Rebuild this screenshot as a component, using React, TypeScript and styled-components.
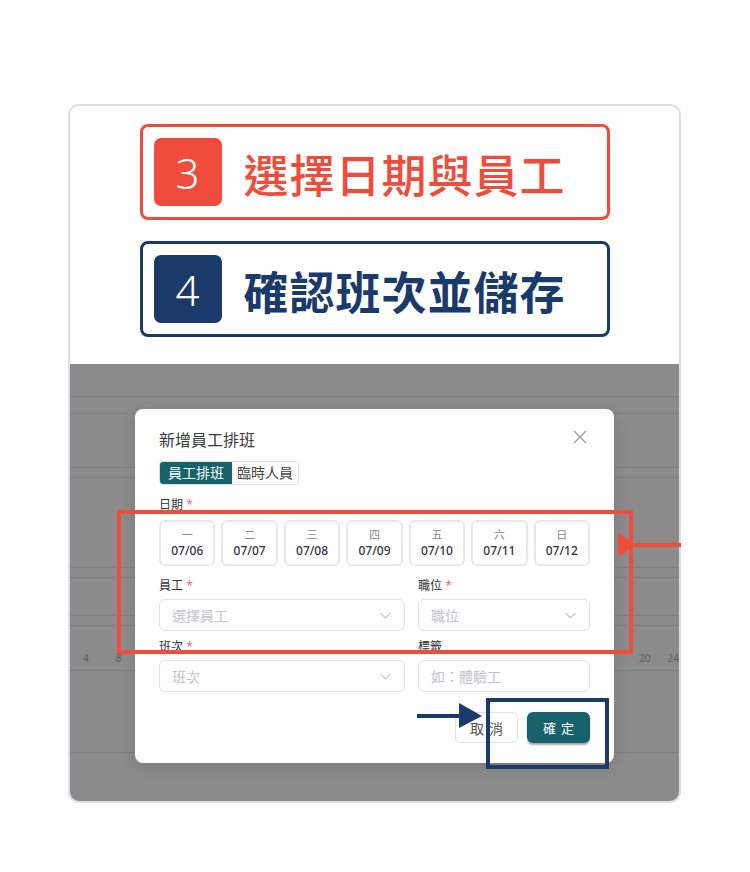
import React from "react";
import styled, { createGlobalStyle } from "styled-components";

const RED = "#f04c3c";
const NAVY = "#1b3a6c";
const TEAL = "#17626b";

const days = [
  { name: "一", date: "07/06" },
  { name: "二", date: "07/07" },
  { name: "三", date: "07/08" },
  { name: "四", date: "07/09" },
  { name: "五", date: "07/10" },
  { name: "六", date: "07/11" },
  { name: "日", date: "07/12" }
];

// heights of the faded calendar rows behind the dialog
const bgRows = [32, 17, 54, 10, 90, 10, 38, 10, 45, 82, 49];

const Chevron = () => (
  <svg width="13" height="13" viewBox="0 0 16 16" fill="none">
    <path d="M2 5l6 6 6-6" stroke="#c0c4cc" strokeWidth="1.3" />
  </svg>
);

const App = () => {
  return (
    <Page>
      <GlobalStyle />
      <Card>
        <Steps>
          <StepBox $color={RED}>
            <Badge $color={RED}>3</Badge>
            <StepText $color={RED} $weight={500}>選擇日期與員工</StepText>
          </StepBox>
          <StepBox $color={NAVY}>
            <Badge $color={NAVY}>4</Badge>
            <StepText $color={NAVY} $weight={700}>確認班次並儲存</StepText>
          </StepBox>
        </Steps>
        <Backdrop>
          {bgRows.map((h, i) => (
            <BgRow key={i} $h={h} $first={i === 0}>
              {i === 8 && (
                <TimeAxis>
                  <TimeGroup>
                    <span>4</span>
                    <span>8</span>
                  </TimeGroup>
                  <TimeGroup>
                    <span>20</span>
                    <span>24</span>
                  </TimeGroup>
                </TimeAxis>
              )}
            </BgRow>
          ))}
          <Modal>
            <Header>
              <Title>新增員工排班</Title>
              <Close>
                <svg width="14" height="14" viewBox="0 0 14 14">
                  <path d="M1 1l12 12M13 1L1 13" stroke="#9a9a9a" strokeWidth="1.3" />
                </svg>
              </Close>
            </Header>
            <Tabs>
              <Tab $active>員工排班</Tab>
              <Tab>臨時人員</Tab>
            </Tabs>
            <Label>
              日期 <Star>*</Star>
            </Label>
            <DayGrid>
              {days.map((d) => (
                <DayButton key={d.date}>
                  <DayName>{d.name}</DayName>
                  <DayDate>{d.date}</DayDate>
                </DayButton>
              ))}
            </DayGrid>
            <FormGrid>
              <Field>
                <FieldLabel>
                  員工 <Star>*</Star>
                </FieldLabel>
                <Select>
                  <span>選擇員工</span>
                  <Chevron />
                </Select>
              </Field>
              <Field>
                <FieldLabel>
                  職位 <Star>*</Star>
                </FieldLabel>
                <Select>
                  <span>職位</span>
                  <Chevron />
                </Select>
              </Field>
              <Field>
                <FieldLabel>
                  班次 <Star>*</Star>
                </FieldLabel>
                <Select>
                  <span>班次</span>
                  <Chevron />
                </Select>
              </Field>
              <Field>
                <FieldLabel>標籤</FieldLabel>
                <Select>
                  <span>如：體驗工</span>
                </Select>
              </Field>
            </FormGrid>
            <Footer>
              <CancelButton>取消</CancelButton>
              <ConfirmButton>確定</ConfirmButton>
            </Footer>
          </Modal>
        </Backdrop>
      </Card>
      <Marks width="750" height="872" viewBox="0 0 750 872">
        <rect x="119" y="512" width="512" height="140" fill="none" stroke={RED} strokeWidth="4" />
        <line x1="634" y1="545" x2="681" y2="545" stroke={RED} strokeWidth="4" />
        <polygon points="618,533 618,557 637,545" fill={RED} />
        <rect x="488" y="700" width="119" height="67" fill="none" stroke={NAVY} strokeWidth="4" />
        <line x1="417" y1="716" x2="466" y2="716" stroke={NAVY} strokeWidth="4" />
        <polygon points="459,703 459,728 482,716" fill={NAVY} />
      </Marks>
    </Page>
  );
};

export default App;

const GlobalStyle = createGlobalStyle`
  body {
    margin: 0;
    background: #fff;
    font-family: "Noto Sans", "Noto Sans CJK TC", sans-serif;
  }
`;

const Page = styled.div`
  position: relative;
  width: 750px;
  height: 872px;
  padding: 104px 0 0 68px;
  box-sizing: border-box;
`;

const Card = styled.div`
  width: 613px;
  height: 699px;
  border: 2px solid #d9e1e5;
  border-radius: 11px;
  overflow: hidden;
  box-sizing: border-box;
  display: flex;
  flex-direction: column;
`;

const Steps = styled.div`
  height: 258px;
  padding-top: 18px;
  box-sizing: border-box;
  display: flex;
  flex-direction: column;
  align-items: center;
  gap: 21px;
  background: #fff;
`;

const StepBox = styled.div<{ $color: string }>`
  width: 470px;
  height: 96px;
  border: 3px solid ${(p) => p.$color};
  border-radius: 8px;
  box-sizing: border-box;
  display: flex;
  align-items: center;
  padding-left: 11px;
  gap: 22px;
`;

const Badge = styled.div<{ $color: string }>`
  width: 68px;
  height: 68px;
  border-radius: 7px;
  background: ${(p) => p.$color};
  color: #fff;
  font-family: "Noto Sans", sans-serif;
  font-size: 42px;
  font-weight: 300;
  display: flex;
  align-items: center;
  justify-content: center;
`;

const StepText = styled.div<{ $color: string; $weight: number }>`
  color: ${(p) => p.$color};
  font-family: "Noto Sans CJK TC", sans-serif;
  font-size: 45px;
  letter-spacing: 1px;
  font-weight: ${(p) => p.$weight};
  line-height: 1;
  margin-top: 2px;
`;

const Backdrop = styled.div`
  position: relative;
  flex: 1;
  background: #8b8b8b;
  display: flex;
  flex-direction: column;
`;

const BgRow = styled.div<{ $h: number; $first?: boolean }>`
  height: ${(p) => p.$h}px;
  flex-shrink: 0;
  box-sizing: border-box;
  border-top: ${(p) => (p.$first ? "none" : "1px solid #7e7e7e")};
  display: flex;
  align-items: center;
`;

const TimeAxis = styled.div`
  width: 100%;
  display: flex;
  justify-content: space-between;
  padding: 20px 0 0 13px;
  font-size: 10px;
  color: #5c5e63;
`;

const TimeGroup = styled.div`
  display: flex;
  gap: 27px;
  &:last-child {
    gap: 17px;
  }
`;

const Modal = styled.div`
  position: absolute;
  left: 65px;
  top: 45px;
  width: 479px;
  height: 354px;
  padding: 20px 24px;
  box-sizing: border-box;
  background: #fff;
  border-radius: 8px;
  box-shadow: 0 4px 14px rgba(0, 0, 0, 0.12);
  display: flex;
  flex-direction: column;
`;

const Header = styled.div`
  display: flex;
  justify-content: space-between;
  align-items: center;
`;

const Title = styled.div`
  font-size: 16px;
  line-height: 22px;
  color: #3a3a3a;
`;

const Close = styled.div`
  display: flex;
  margin: -6px 3px 0 0;
`;

const Tabs = styled.div`
  margin-top: 10px;
  align-self: flex-start;
  display: flex;
  height: 24px;
  border: 1px solid #dcdfe6;
  border-radius: 4px;
  overflow: hidden;
  box-sizing: border-box;
`;

const Tab = styled.div<{ $active?: boolean }>`
  padding: 0 ${(p) => (p.$active ? 8 : 5)}px;
  font-size: 14px;
  line-height: 22px;
  background: ${(p) => (p.$active ? TEAL : "#fff")};
  color: ${(p) => (p.$active ? "#fff" : "#444")};
`;

const Label = styled.div`
  margin-top: 10px;
  font-size: 12px;
  line-height: 20px;
  color: #333;
`;

const FieldLabel = styled(Label)`
  margin-top: 6px;
`;

const Star = styled.span`
  color: #f56c6c;
`;

const DayGrid = styled.div`
  margin-top: 5px;
  display: grid;
  grid-template-columns: repeat(7, 1fr);
  gap: 6px;
`;

const DayButton = styled.div`
  height: 46px;
  border: 2px solid #e6e8ed;
  border-radius: 6px;
  box-sizing: border-box;
  display: flex;
  flex-direction: column;
  align-items: center;
  justify-content: center;
`;

const DayName = styled.div`
  font-size: 11px;
  line-height: 15px;
  color: #8a8a8a;
`;

const DayDate = styled.div`
  font-size: 12px;
  line-height: 17px;
  font-weight: 500;
  color: #2f3340;
`;

const FormGrid = styled.div`
  margin-top: 4px;
  display: grid;
  grid-template-columns: 246px 172px;
  column-gap: 13px;
`;

const Field = styled.div`
  display: flex;
  flex-direction: column;
  gap: 3px;
`;

const Select = styled.div`
  height: 32px;
  border: 1px solid #dfe1e6;
  border-radius: 6px;
  box-sizing: border-box;
  padding: 0 12px;
  display: flex;
  align-items: center;
  justify-content: space-between;
  font-size: 14px;
  color: #c0c4cc;
`;

const Footer = styled.div`
  margin-top: auto;
  display: flex;
  justify-content: flex-end;
  gap: 9px;
`;

const CancelButton = styled.div`
  width: 63px;
  height: 31px;
  box-sizing: border-box;
  border: 1px solid #dfe1e6;
  border-radius: 5px;
  display: flex;
  align-items: center;
  justify-content: center;
  font-size: 14px;
  letter-spacing: 5px;
  padding-left: 5px;
  color: #555;
`;

const ConfirmButton = styled.div`
  width: 63px;
  height: 31px;
  border-radius: 6px;
  background: ${TEAL};
  box-shadow: 0 2px 2px rgba(0, 0, 0, 0.35);
  display: flex;
  align-items: center;
  justify-content: center;
  font-size: 13px;
  letter-spacing: 5px;
  padding-left: 5px;
  box-sizing: border-box;
  color: #fff;
`;

const Marks = styled.svg`
  position: absolute;
  top: 0;
  left: 0;
  pointer-events: none;
`;
